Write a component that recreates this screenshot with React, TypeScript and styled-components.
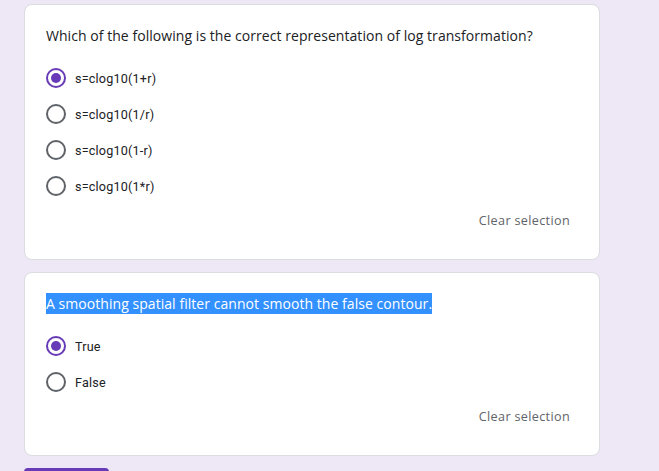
import React from "react";
import styled, { createGlobalStyle } from "styled-components";

const Global = createGlobalStyle`
  html, body { margin: 0; padding: 0; }
  body {
    background: #ede7f6;
    font-family: Roboto, "Liberation Sans", sans-serif;
    color: #202124;
    overflow: hidden;
  }
`;

const Page = styled.div`
  display: flex;
  flex-direction: column;
  gap: 12px;
  width: 576px;
  padding: 4px 0 0 24px;
`;

const Card = styled.section`
  background: #fff;
  border: 1px solid #dadce0;
  border-radius: 8px;
  padding: 21px 29px 28px 21px;
  display: flex;
  flex-direction: column;
`;

const Title = styled.div`
  font-family: "Open Sans", "Liberation Sans", sans-serif;
  font-size: 14px;
  line-height: 20px;
  color: #202124;
  letter-spacing: 0.05px;
`;

const Selected = styled.span`
  background: #3390ff;
  color: #fff;
  padding: 1px 0;
`;

const Options = styled.div`
  display: flex;
  flex-direction: column;
  margin-top: 14px;
`;

const Row = styled.label`
  display: flex;
  align-items: center;
  height: 36px;
  gap: 9px;
`;

const Radio = styled.span<{ $checked?: boolean }>`
  box-sizing: border-box;
  width: 20px;
  height: 20px;
  border-radius: 50%;
  border: 2px solid ${(p) => (p.$checked ? "#673ab7" : "#5f6368")};
  display: flex;
  align-items: center;
  justify-content: center;
  &::after {
    content: "";
    width: 10px;
    height: 10px;
    border-radius: 50%;
    background: ${(p) => (p.$checked ? "#673ab7" : "transparent")};
  }
`;

const Label = styled.span`
  font-family: Roboto, "Liberation Sans", sans-serif;
  font-size: 12.6px;
  color: #202124;
  letter-spacing: 0.2px;
`;

const Footer = styled.div`
  display: flex;
  justify-content: flex-end;
  margin-top: 7px;
`;

const ClearButton = styled.button`
  border: none;
  background: none;
  padding: 0;
  font-family: "Open Sans", "Liberation Sans", sans-serif;
  font-size: 12.6px;
  line-height: 20px;
  color: #5f6368;
  letter-spacing: 0.35px;
  cursor: pointer;
`;

const Submit = styled.button`
  width: 85px;
  height: 36px;
  border: none;
  border-radius: 4px;
  background: #673ab7;
  color: #fff;
  font-family: "Open Sans", sans-serif;
  font-size: 13px;
`;

type Q = { title: React.ReactNode; options: string[]; checked: number };

const questions: Q[] = [
  {
    title: "Which of the following is the correct representation of log transformation?",
    options: ["s=clog10(1+r)", "s=clog10(1/r)", "s=clog10(1-r)", "s=clog10(1*r)"],
    checked: 0,
  },
  {
    title: <Selected>A smoothing spatial filter cannot smooth the false contour.</Selected>,
    options: ["True", "False"],
    checked: 0,
  },
];

export default function App() {
  return (
    <>
      <Global />
      <Page>
        {questions.map((q, i) => (
          <Card key={i}>
            <Title>{q.title}</Title>
            <Options>
              {q.options.map((o, j) => (
                <Row key={o}>
                  <Radio $checked={j === q.checked} />
                  <Label>{o}</Label>
                </Row>
              ))}
            </Options>
            <Footer>
              <ClearButton>Clear selection</ClearButton>
            </Footer>
          </Card>
        ))}
        <Submit aria-label="Submit" />
      </Page>
    </>
  );
}
